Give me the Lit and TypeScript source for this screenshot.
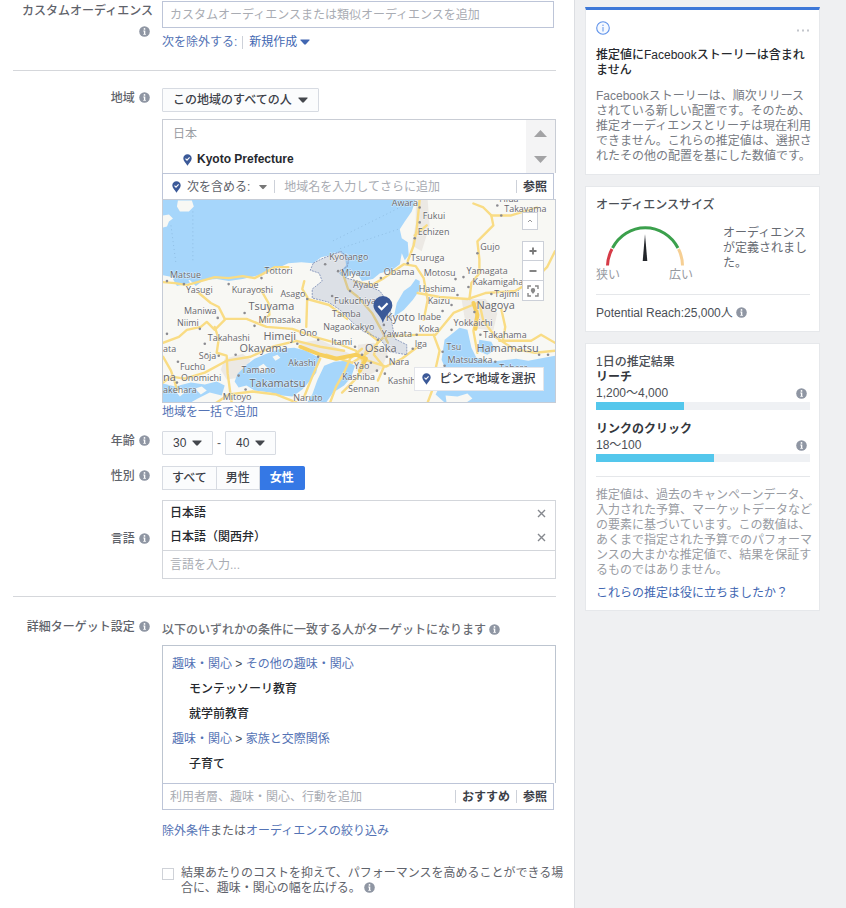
import { LitElement, html, svg, css } from "lit";
import { customElement, property } from "lit/decorators.js";

const shared = css`
  *, *::before, *::after { box-sizing: border-box; }
  button, input, select { font: inherit; color: inherit; margin: 0; padding: 0; }
  button { background: none; border: 0; cursor: pointer; }
  a { color: #5473b5; text-decoration: none; }
  ul { list-style: none; margin: 0; padding: 0; }
  p, h2, h3 { margin: 0; font-size: 12px; }
`;

const pinIcon = html`<svg width="9" height="12" viewBox="0 0 9 12" aria-hidden="true">
  <path d="M4.5 0.3a4.2 4.2 0 0 1 4.2 4.2c0 2.5-2.6 4.6-4.2 7.2C2.900 9.100.3 7 .3 4.500A4.200 4.200 0 0 1 4.500.3z" fill="#3b5998"/>
  <path d="M2.500 4.600l1.500 1.500 2.600-2.800" fill="none" stroke="#fff" stroke-width="1.100"/>
</svg>`;

const caret = html`<svg class="caret" width="10" height="6" viewBox="0 0 10 6" aria-hidden="true">
  <path d="M.8.5h8.400q.8 0 .3.8L5.900 5.300q-.9.9-1.800 0L.5 1.300Q0 .5.8.5z" fill="currentColor"/>
</svg>`;

const infoIcon = html`<svg width="11" height="11" viewBox="0 0 11 11" role="img" aria-label="情報">
  <circle cx="5.500" cy="5.500" r="5.300" fill="#8f96a3"/>
  <circle cx="5.500" cy="2.900" r="0.900" fill="#fff"/>
  <path d="M4.300 4.600h2v3.300h.6v.9H4.300v-.9h.6V5.500h-.6z" fill="#fff"/>
</svg>`;

type Place = [string, number, number, boolean?];

const places: Place[] = [
  ["Matsue", 7, 79], ["Tottori", 102, 75], ["Yasugi", 23, 94], ["Kurayoshi", 69, 94],
  ["Asago", 118, 98], ["Tsuyama", 86, 111, true], ["Maniwa", 21, 115], ["Mimasaka", 96, 124],
  ["Niimi", 14, 127], ["Takahashi", 45, 142], ["Himeji", 101, 141, true], ["Ono", 137, 137],
  ["Itami", 169, 146], ["Okayama", 77, 153, true], ["Sōja", 36, 160], ["Akashi", 126, 167],
  ["ata", 0, 153], ["Fuchū", 17, 171], ["Tamano", 79, 174], ["Onomichi", 18, 182],
  ["na", 0, 182, true], ["akehara", 0, 194], ["Takamatsu", 87, 188, true], ["Mitoyo", 60, 202],
  ["Naruto", 131, 203], ["Kyotango", 167, 61], ["Miyazu", 179, 77], ["Ayabe", 191, 89],
  ["Fukuchiyama", 172, 105], ["Tamba", 170, 118], ["Nagaokakyo", 161, 131], ["Yao", 192, 170],
  ["Kashiba", 180, 181], ["Sennan", 186, 193], ["Awara", 230, 7], ["Fukui", 261, 20],
  ["Echizen", 256, 36], ["Takayama", 343, 13], ["Gujo", 319, 51], ["Tsuruga", 249, 62],
  ["Obama", 222, 76], ["Motosu", 262, 77], ["Yamagata", 305, 75], ["Kakamigaha", 311, 86],
  ["Hashima", 257, 93], ["Kaizu", 266, 105], ["Tajimi", 333, 98], ["Nagoya", 315, 110, true],
  ["Kyoto", 224, 122, true], ["Inabe", 256, 121], ["Koka", 257, 133], ["Yokkaichi", 292, 127],
  ["Takahama", 322, 139], ["Yawata", 220, 138], ["Osaka", 203, 153, true], ["Iga", 253, 148],
  ["Tsu", 285, 151], ["Hamamatsu", 315, 153, true], ["Nara", 227, 166], ["Matsusaka", 286, 164],
  ["Tahara", 338, 172], ["Kashihara", 226, 185], ["Hida", 338, 2],
];

const towns: [number, number][] = [
  [4, 82], [21, 85], [66, 85], [99, 79], [82, 114], [55, 119], [37, 130], [92, 127], [145, 100],
  [42, 145], [135, 145], [156, 141], [193, 148], [73, 156], [56, 157], [156, 158], [15, 163],
  [76, 177], [83, 191], [14, 184], [4, 135], [163, 65], [176, 72], [188, 92], [170, 97],
  [258, 8], [258, 23], [253, 39], [336, 6], [340, 16], [316, 54], [246, 64], [219, 79],
  [294, 80], [302, 78], [307, 88], [296, 96], [290, 106], [281, 112], [330, 95], [313, 113],
  [255, 136], [290, 131], [319, 136], [251, 150], [281, 153], [200, 156], [225, 158], [215, 172],
  [223, 175], [283, 167], [334, 163], [378, 156], [387, 156], [209, 164], [222, 126], [216, 141],
];

const mapPicture = svg`
  <rect width="394" height="204" fill="#f8f8f4"/>
  <g fill="#ece9e4">
    <path d="M62 160l18-5 8 6-10 18-14 2-6-10z"/>
    <path d="M196 146l16-2 14 10-6 16-16 8-10-6z"/>
    <path d="M300 100l24 0 12 14-4 18-16-2-12-6z"/>
    <path d="M254 0h12l2 26-8 26-10-6 4-22z"/>
    <path d="M136 144l22-3 30 14-12 7-22-6z"/>
  </g>
  <g fill="#a6d6fb">
    <path d="M0 0H254L250 12 243 22 238 30 240 39 246 43 247 56 243 61 240 54 238 65 230 71 218 74 211 80 200 82 196 76 190 74 183 80 177 74 184 66 183 57 178 53 168 56 159 58 151 64 139 63 126 64 115 69 103 74 92 77 80 80 66 82 54 80 41 81 33 87 27 81 14 82 9 78 0 76z"/>
    <path d="M84 166l8-6 12-5 14-5 14-1 12 3 13 7-3 15-6 8-8 9-10 7-10-1-12-3-16-2-8-5-8 2-4-6 3-8z"/>
    <path d="M0 185l12 3 16-4 14 2 12-3 8 4-3 10-12-3-12 6-7 4H0z"/>
    <path d="M162 167l10-4 12-1 9 5-4 12-7 8-11 7-7 10h-19l5-8 5-14z"/>
    <path d="M254 80l4 2v9l-7 10-9 10-10 7 3-14 7-12 7-5z"/>
    <path d="M293 133l5-4 8 2 4 18 5 10 14 4 26-3 12 2 27-5v47H283l-9-8 7-14 4-9-5-12 3-20z"/>
    <path d="M318 141l12 2 4 8-8 5-10-4z"/>
    <path d="M10 80l14-2 3 6-13 3z"/>
  </g>
  <g fill="#f8f8f4">
    <path d="M15 1h14l2 6-5 5-9 0-3-5z"/>
    <path d="M0 16l6-1 4 4-4 3-2 5-4 1z"/>
    <path d="M96 168l5-3 4 4-4 5-5-2z"/>
    <path d="M32 190l7-2 5 4-6 4zM12 192l6-3 5 4-6 5zM110 158l5-2 3 3-5 3z"/>
    <path d="M284 197l12 1 10-3 5 5-6 4h-20z"/>
  </g>
  <path d="M8 26l5 38M30 12v52M254 0L170 42M236 30L176 50" fill="none" stroke="#8fbde3" stroke-dasharray="1 3"/>
  <g fill="none" stroke="#f9dc84" stroke-width="2.400" stroke-linejoin="round" stroke-linecap="round">
    <path d="M0 83l12 1 12 2 14-4 14-4 14 1 14-2 12 2 8-4 12-7 14 0"/>
    <path d="M36 94l12 10 8 4 6 12 22 0 20 8 26 2 22 8 22 6 20 8 8 12"/>
    <path d="M0 144l16-6 8-7 14-3 6-5 8 8 10-10"/>
    <path d="M52 128l4 12-2 14 10 3 1 18 4 29"/>
    <path d="M0 184l8-6 14 2 20-6 22-12 24-4 22-10 24-6 24 6 24 4"/>
    <path d="M0 158l8 14 4 12 2 8"/>
    <path d="M142 82l-2 8 5 8-1 30M145 100l22 6 18 14"/>
    <path d="M98 90l8 14 1 12-10 8"/>
    <path d="M180 72l6 18 10 8 14 16 10 18 6 12"/>
    <path d="M192 82l18 4 12-7 20-14 12 2 8 12 4 22-4 20"/>
    <path d="M246 62l6-16 3-16 3-30M253 36l12-10"/>
    <path d="M312 4l10 4 8 8 2 10-16 16 2 18 0 14-8 10-2 16"/>
    <path d="M330 16l20 0 26-8"/>
    <path d="M256 94l22 4 28 2 18-6 30-2 20-12 12-12 8-16"/>
    <path d="M164 156l26 8 16-10 16-16 32-2 20 0 18-22 24-10"/>
    <path d="M200 150l-12 10-6 14-8 14-6 16M204 152l-8 26-16 16"/>
    <path d="M204 132l12 10-4 14 10 12-6 14M200 160l24 8 16-8 16-12"/>
    <path d="M272 136l6 16-4 18-2 18-6 16"/>
    <path d="M318 104l4 18 12 16 18 12 22 4 20-2M316 112l-4 20 4 22M338 142l32 0 10-6 14 8M340 110l4 18-2 12"/>
    <path d="M54 204l12-8 24-3 24 3 20 8M158 160l-8 18-8 20"/>
  </g>
  <g fill="none" stroke="#f6cf5e" stroke-width="4" stroke-linecap="round" stroke-linejoin="round">
    <path d="M138 148l20 8 16 4 20-4 10 4-6 12"/>
    <path d="M312 104l4 12-2 14"/>
  </g>
  <path d="M151 64l10-5 18-7 8 8-2 8-7 3 6 8 12 3 22 10 10 14 2 18 3 16 12 6v10l-17-3-10-13-16-7-10-8-14-14-12-8-16-4 0-9 10-8-3-8-9-3z"
    fill="#7c8bb8" fill-opacity=".22" stroke="#8d9cc0" stroke-dasharray="2 1"/>
  <g fill="#8b8b90">${towns.map(([x, y]) => svg`<circle cx=${x} cy=${y} r="1.300"/>`)}</g>
  <g class="places">${places.map(([name, x, y, big]) =>
    svg`<text class=${big ? "city" : "town"} x=${x} y=${y}>${name}</text>`)}</g>
  <path d="M221 97a9.500 9.500 0 0 1 9.500 9.500c0 6-7 9-9.500 17.500-2.500-8.500-9.500-11.500-9.500-17.500A9.500 9.500 0 0 1 221 97z" fill="#3b5998"/>
  <path d="M216.500 107l3.200 3.200 6-6" fill="none" stroke="#fff" stroke-width="2.200"/>
`;

@customElement("region-map")
export class RegionMap extends LitElement {
  static styles = [shared, css`
    :host { display: block; position: relative; height: 204px; margin-top: -1px; border: 1px solid #c6ccd6; overflow: hidden; }
    .picture { display: block; width: 100%; height: 100%; }
    .places { font-family: "Open Sans", "Noto Sans", sans-serif; fill: #66666b; stroke: #fff; stroke-opacity: .6; stroke-width: 1px; paint-order: stroke; }
    .town { font-size: 9px; }
    .city { font-size: 11px; }
    .tools { position: absolute; top: 12px; right: 11px; width: 22px; display: flex; flex-direction: column; gap: 11px; }
    .tool { display: flex; align-items: center; justify-content: center; height: 20px; width: 22px; background: #fff; border: 1px solid #ccd0d8; }
    .fold { width: 16px; height: 18px; }
    .zoom { display: flex; flex-direction: column; }
    .zoom .tool + .tool { border-top: 0; }
    .drop { position: absolute; right: 11px; bottom: 11px; height: 24px; width: 130px; display: flex; align-items: center; justify-content: center; gap: 8px; background: #fff; border: 1px solid #e3e5ea; color: #3c4048; font-weight: 500; }
  `];

  render() {
    return html`
      <svg class="picture" viewBox="0 0 394 204" preserveAspectRatio="xMidYMid slice" role="img" aria-label="地図">${mapPicture}</svg>
      <div class="tools">
        <button class="tool fold" aria-label="折りたたむ"><svg width="6" height="4" viewBox="0 0 6 4"><path d="M1 3l2-2 2 2" fill="none" stroke="#999"/></svg></button>
        <div class="zoom">
          <button class="tool" aria-label="拡大"><svg width="8" height="8" viewBox="0 0 8 8"><path d="M4 .5v7M.5 4h7" stroke="#777" stroke-width="1.800"/></svg></button>
          <button class="tool" aria-label="縮小"><svg width="8" height="8" viewBox="0 0 8 8"><path d="M.5 4h7" stroke="#777" stroke-width="1.800"/></svg></button>
          <button class="tool" aria-label="全体表示"><svg width="12" height="12" viewBox="0 0 12 12"><path d="M1 4V1h3M8 1h3v3M11 8v3H8M4 11H1V8" fill="none" stroke="#888" stroke-width="1.400"/><path d="M6 3a2.200 2.200 0 0 1 2.200 2.200C8.200 6.600 6.800 7.600 6 9 5.200 7.600 3.800 6.600 3.800 5.200A2.200 2.200 0 0 1 6 3z" fill="#888"/></svg></button>
        </div>
      </div>
      <button class="drop">${pinIcon}ピンで地域を選択</button>
    `;
  }
}

@customElement("audience-form")
export class AudienceForm extends LitElement {
  static styles = [shared, css`
    :host { display: block; min-width: 0; background: #fff; color: #5f636b; padding: 1px 0 12px 13px; }
    .section { margin-right: 18px; border-bottom: 1px solid #d5d7db; }
    .section.first { padding-bottom: 19px; }
    .section.places { padding: 17px 0; }
    .row { display: grid; grid-template-columns: 140px minmax(0, 1fr); column-gap: 9px; }
    .row + .row { margin-top: 11px; }
    .row + .row.tight { margin-top: 10px; }
    .label { text-align: right; font-weight: 500; line-height: 21px; color: #5f636b; padding-right: 3px; }
    .label.wide { padding: 0; }
    .label svg { vertical-align: -1px; margin-left: 1px; }
    .label.wide svg { margin-right: 3px; }
    .label.middle { align-self: center; }
    .entry { display: flex; align-items: center; height: 27px; margin-right: 2px; padding: 0 7px; border: 1px solid #bdc5d8; background: #fff; }
    .entry input { flex: 1; min-width: 0; height: 24px; border: 0; outline: 0; background: none; }
    input::placeholder { color: #a9acb3; opacity: 1; }
    .links { display: flex; align-items: center; gap: 6px; margin-top: 5px; line-height: 18px; color: #5473b5; }
    .links .bar { margin-left: -1px; }
    .bar { flex: none; width: 1px; height: 13px; background: #cdd1d9; }
    .links .menu, .mode { display: flex; align-items: center; gap: 3px; }
    .links .menu { color: #4267b2; }
    .pick { position: relative; display: inline-flex; align-items: center; height: 24px; vertical-align: top; }
    .pick select { appearance: none; height: 24px; padding: 0 24px 0 10px; background: #fbfcfd; border: 1px solid #d7dbe2; border-radius: 1px; color: #3c4048; font-weight: 500; }
    .pick .caret { position: absolute; right: 11px; color: #44474d; pointer-events: none; }
    .ages { display: flex; align-items: center; gap: 4px; }
    .ages select { width: 51px; padding: 0 0 0 10px; }
    .chosen { display: flex; height: 54px; margin-top: 7px; border: 1px solid #c9cdd5; border-bottom: 0; }
    .chosen ul { flex: 1; padding-left: 10px; color: #9a9da3; line-height: 25px; padding-top: 2px; }
    .chosen .item { display: flex; align-items: center; gap: 5px; padding-left: 10px; color: #26292e; font-weight: 700; }
    .steps { width: 29px; background: #f4f4f5; display: flex; flex-direction: column; }
    .steps button { flex: 1; display: flex; align-items: center; justify-content: center; }
    .entry.include { padding: 0 6px 0 9px; }
    .include .mode { gap: 6px; margin-right: 7px; }
    .include .mode .caret { width: 8px; margin-left: 3px; color: #777; }
    .include input { margin-left: 9px; }
    .browse { flex: none; color: #3c4048; font-weight: 700; margin-left: 6px; }
    .browse + .bar { margin-left: 6px; }
    .entry.find { padding-right: 6px; }
    .after { line-height: 18px; display: block; }
    .genders { display: flex; border: 0; margin: 0; padding: 0; height: 24px; min-width: 0; }
    .genders label { position: relative; display: flex; align-items: center; padding: 0 9px; border: 1px solid #d7dbe2; background: #fbfcfd; color: #3c4048; font-weight: 500; }
    .genders label + label { border-left: 0; }
    .genders input { position: absolute; inset: 0; width: 100%; height: 100%; opacity: 0; }
    .genders label.on { background: #3578e5; border-color: #3578e5; color: #fff; font-weight: 700; border-radius: 0 2px 2px 0; padding: 0 10px; }
    .languages { border: 1px solid #d3d6db; }
    .languages ul { height: 49px; }
    .languages li { display: flex; align-items: center; justify-content: space-between; height: 24px; padding: 0 8px 0 7px; color: #26292e; font-weight: 500; }
    .languages li button { display: flex; padding: 1px; }
    .languages input { display: block; width: 100%; height: 28px; padding: 0 7px; border: 0; border-top: 1px solid #d3d6db; outline: 0; }
    .detail { padding-top: 20px; }
    .detail .field { padding-top: 4px; margin-right: 18px; min-width: 0; }
    .rule { font-weight: 500; line-height: 18px; color: #6a6d74; white-space: nowrap; }
    .rule svg, .agree svg { vertical-align: -1px; }
    .topics { height: 138px; margin-top: 6px; padding: 6px 9px; border: 1px solid #bdc5d0; border-bottom: 0; line-height: 25px; color: #44474d; }
    .topics li { height: 25px; }
    .topics .leaf { padding-left: 17px; color: #26292e; font-weight: 500; }
    .narrow { margin-top: 12px; line-height: 18px; }
    .agree { display: flex; gap: 7px; margin: 26px -16px 0 0; line-height: 15px; }
    .agree input { appearance: none; flex: none; width: 12px; height: 12px; margin-top: 2px; border: 1px solid #cfd2d8; background: #fff; }
  `];

  private removeButton(name: string) {
    return html`<button aria-label="${name}を削除"><svg width="9" height="9" viewBox="0 0 9 9"><path d="M1 1l7 7M8 1l-7 7" stroke="#85888e" stroke-width="1.400"/></svg></button>`;
  }

  render() {
    return html`
      <div class="section first row">
        <label class="label wide" for="custom">カスタムオーディエンス ${infoIcon}</label>
        <div>
          <div class="entry"><input id="custom" placeholder="カスタムオーディエンスまたは類似オーディエンスを追加"></div>
          <div class="links"><a href="#">次を除外する:</a><span class="bar"></span><button class="menu">新規作成${caret}</button></div>
        </div>
      </div>

      <div class="section places">
        <div class="row">
          <label class="label" for="scope">地域 ${infoIcon}</label>
          <div>
            <span class="pick"><select id="scope"><option>この地域のすべての人</option></select>${caret}</span>
            <div class="chosen">
              <ul>
                <li>日本</li>
                <li class="item">${pinIcon}Kyoto Prefecture</li>
              </ul>
              <div class="steps">
                <button aria-label="上へ"><svg width="13" height="7" viewBox="0 0 13 7"><path d="M6.500 0L13 7H0z" fill="#a3a3a5"/></svg></button>
                <button aria-label="下へ"><svg width="13" height="7" viewBox="0 0 13 7"><path d="M6.500 7L13 0H0z" fill="#a3a3a5"/></svg></button>
              </div>
            </div>
            <div class="entry include">
              <button class="mode">${pinIcon}次を含める:${caret}</button><span class="bar"></span>
              <input aria-label="地域名" placeholder="地域名を入力してさらに追加">
              <span class="bar"></span><button class="browse">参照</button>
            </div>
            <region-map></region-map>
            <a class="after" href="#">地域を一括で追加</a>
          </div>
        </div>
        <div class="row tight">
          <label class="label" for="min">年齢 ${infoIcon}</label>
          <div class="ages">
            <span class="pick"><select id="min"><option>30</option></select>${caret}</span>-<span class="pick"><select aria-label="上限年齢"><option>40</option></select>${caret}</span>
          </div>
        </div>
        <div class="row">
          <span class="label" id="gender">性別 ${infoIcon}</span>
          <fieldset class="genders" aria-labelledby="gender">
            <label><input type="radio" name="gender">すべて</label>
            <label><input type="radio" name="gender">男性</label>
            <label class="on"><input type="radio" name="gender" checked>女性</label>
          </fieldset>
        </div>
        <div class="row tight">
          <label class="label middle" for="language">言語 ${infoIcon}</label>
          <div class="languages">
            <ul>${["日本語", "日本語（関西弁）"].map((name) => html`<li>${name}${this.removeButton(name)}</li>`)}</ul>
            <input id="language" placeholder="言語を入力...">
          </div>
        </div>
      </div>

      <div class="row detail">
        <label class="label" for="interest">詳細ターゲット設定 ${infoIcon}</label>
        <div class="field">
          <p class="rule">以下のいずれかの条件に一致する人がターゲットになります ${infoIcon}</p>
          <ul class="topics">
            <li><a href="#">趣味・関心</a> &gt; <a href="#">その他の趣味・関心</a></li>
            <li class="leaf">モンテッソーリ教育</li>
            <li class="leaf">就学前教育</li>
            <li><a href="#">趣味・関心</a> &gt; <a href="#">家族と交際関係</a></li>
            <li class="leaf">子育て</li>
          </ul>
          <div class="entry find">
            <input id="interest" placeholder="利用者層、趣味・関心、行動を追加">
            <span class="bar"></span><button class="browse">おすすめ</button><span class="bar"></span><button class="browse">参照</button>
          </div>
          <p class="narrow"><a href="#">除外条件</a>または<a href="#">オーディエンスの絞り込み</a></p>
          <label class="agree"><input type="checkbox"><span>結果あたりのコストを抑えて、パフォーマンスを高めることができる場合に、趣味・関心の幅を広げる。 ${infoIcon}</span></label>
        </div>
      </div>
    `;
  }
}

@customElement("result-bar")
export class ResultBar extends LitElement {
  @property() heading = "";
  @property() range = "";
  @property({ type: Number }) share = 0;

  static styles = [shared, css`
    :host { display: block; margin-right: 3px; line-height: 15px; }
    h3 { font-weight: 700; color: #33363c; }
    .figures { display: flex; align-items: center; justify-content: space-between; height: 17px; padding-right: 3px; color: #4b4f56; }
    .track { height: 8px; background: #eff1f4; }
    .fill { height: 8px; background: #54c7ec; }
  `];

  render() {
    return html`
      <h3>${this.heading}</h3>
      <div class="figures"><span>${this.range}</span>${infoIcon}</div>
      <div class="track"><div class="fill" style="width:${this.share}%"></div></div>
    `;
  }
}

@customElement("estimate-panel")
export class EstimatePanel extends LitElement {
  static styles = [shared, css`
    :host { display: flex; flex-direction: column; gap: 11px; padding: 7px 26px 20px 10px; border-left: 1px solid #dcdee2; background: #eff0f2; line-height: 15px; }
    .card { background: #fff; border: 1px solid #e6e8eb; padding: 10px 6px 9px 10px; }
    .notice { border-top: 3px solid #3d78d8; padding: 11px 6px 10px 10px; }
    .top { display: flex; justify-content: space-between; align-items: center; height: 14px; margin: 0 3px 13px 0; }
    .top button { display: flex; margin-top: 4px; }
    .notice h2 { color: #26292e; font-weight: 500; margin-bottom: 11px; }
    .notice p { color: #777b83; }
    .size h2, .daily h2 { color: #4b4f56; font-weight: 500; }
    .size h2 { line-height: 17px; }
    .state { display: flex; justify-content: space-between; align-items: flex-start; margin: 9px 0 11px; color: #666a72; }
    .state p { width: 90px; padding-top: 3px; }
    .gauge { width: 97px; }
    .gauge svg { display: block; margin-left: 9px; }
    .ends { display: flex; justify-content: space-between; color: #96999f; }
    .line { border: 0; border-top: 1px solid #e5e7ea; margin: 0 3px 0 0; }
    .reach { padding: 11px 0 0; color: #4b4f56; }
    .reach svg { vertical-align: -1px; }
    .size { padding-bottom: 10px; }
    .daily { padding-top: 11px; }
    .daily result-bar + result-bar { margin-top: 12px; }
    .daily .line { margin: 14px 3px 11px 0; }
    .daily p { color: #999ca3; margin-bottom: 8px; }
    .daily a { color: #4267b2; }
  `];

  render() {
    return html`
      <section class="card notice">
        <div class="top">
          <svg width="14" height="14" viewBox="0 0 14 14" aria-hidden="true"><circle cx="7" cy="7" r="6.300" fill="#f5f9ff" stroke="#5f92ea" stroke-width="1.100"/><circle cx="7" cy="4.200" r=".8" fill="#78a3ee"/><path d="M7 6v4.500" stroke="#78a3ee" stroke-width="1.200"/></svg>
          <button aria-label="その他"><svg width="13" height="3" viewBox="0 0 13 3"><path d="M0 .5h2v2H0zM5 .5h2v2H5zM10 .5h2v2h-2z" fill="#c3c6cc"/></svg></button>
        </div>
        <h2>推定値にFacebookストーリーは含まれません</h2>
        <p>Facebookストーリーは、順次リリースされている新しい配置です。そのため、推定オーディエンスとリーチは現在利用できません。これらの推定値は、選択されたその他の配置を基にした数値です。</p>
      </section>

      <section class="card size">
        <h2>オーディエンスサイズ</h2>
        <div class="state">
          <div class="gauge">
            <svg width="80" height="45" viewBox="0 0 80 45" aria-hidden="true">
              <g fill="none" stroke-width="3">
                <path d="M2.500 42.500A37.500 38 0 0 1 7 26" stroke="#d63b47"/>
                <path d="M7.500 25A37 38 0 0 1 73 25" stroke="#3ba04c"/>
                <path d="M73.500 26A37.500 38 0 0 1 77.500 42.500" stroke="#f6cf94"/>
              </g>
              <path d="M40 11L42.300 38h-4.600z" fill="#23262b"/>
            </svg>
            <div class="ends"><span>狭い</span><span>広い</span></div>
          </div>
          <p>オーディエンスが定義されました。</p>
        </div>
        <hr class="line">
        <p class="reach">Potential Reach:25,000人 ${infoIcon}</p>
      </section>

      <section class="card daily">
        <h2>1日の推定結果</h2>
        <result-bar heading="リーチ" range="1,200〜4,000" share="41"></result-bar>
        <result-bar heading="リンクのクリック" range="18〜100" share="55"></result-bar>
        <hr class="line">
        <p>推定値は、過去のキャンペーンデータ、入力された予算、マーケットデータなどの要素に基づいています。この数値は、あくまで指定された予算でのパフォーマンスの大まかな推定値で、結果を保証するものではありません。</p>
        <a href="#">これらの推定は役に立ちましたか？</a>
      </section>
    `;
  }
}

@customElement("app-root")
export class AppRoot extends LitElement {
  static styles = css`
    :host {
      display: grid;
      grid-template-columns: minmax(0, 1fr) 272px;
      min-height: 100vh;
      font: 12px/18px "Liberation Sans", "Noto Sans CJK JP", sans-serif;
    }
  `;

  render() {
    return html`<audience-form></audience-form><estimate-panel></estimate-panel>`;
  }
}
